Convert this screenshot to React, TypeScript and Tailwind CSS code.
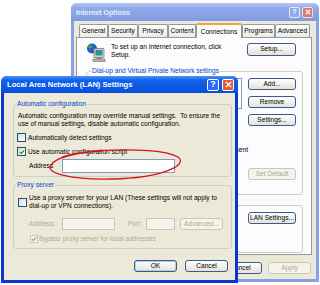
import type { ReactNode } from "react";

type BtnProps = {
  children: ReactNode;
  disabled?: boolean;
  isDefault?: boolean;
  className?: string;
};

const XpButton = ({ children, disabled, isDefault, className = "" }: BtnProps) => (
  <div
    className={`flex h-[12px] shrink-0 items-center justify-center rounded-[3px] border leading-none ${
      disabled
        ? "border-[#C9C7BA] bg-[#F5F4EA] text-[#ACA899]"
        : "border-[#3C5A86] bg-linear-to-b from-white to-[#E4E2D8] text-black"
    } ${isDefault ? "shadow-[inset_0_0_0_1px_#B4CCF2]" : ""} ${className}`}
  >
    {children}
  </div>
);

const CheckBox = ({ checked, disabled, small }: { checked?: boolean; disabled?: boolean; small?: boolean }) => (
  <div
    className={`flex shrink-0 items-center justify-center border ${small ? "h-[8px] w-[8px]" : "h-[9px] w-[9px]"} ${
      disabled ? "border-[#CAC8BB] bg-[#F5F4EA]" : "border-[#1C5180] bg-linear-to-br from-[#DCDCD7] to-white"
    }`}
  >
    {checked && (
      <svg viewBox="0 0 7 7" className="h-[6px] w-[6px]">
        <path d="M1 3.5 L2.8 5.3 L6 1.6" fill="none" stroke={disabled ? "#ACA899" : "#21A121"} strokeWidth="1.5" />
      </svg>
    )}
  </div>
);

const Group = ({ label, children, className = "", legendClass = "" }: { label?: string; children: ReactNode; className?: string; legendClass?: string }) => (
  <fieldset className={`rounded-[3px] border border-[#D0D0BF] ${className}`}>
    {label && <legend className={`px-[1px] text-[#0046D5] ${legendClass}`}>{label}</legend>}
    {children}
  </fieldset>
);

const TitleButtons = ({ active }: { active?: boolean }) =>
  active ? (
    <div className="ml-auto flex gap-[3px]">
      <div className="flex h-[12px] w-[12px] items-center justify-center rounded-[2px] border border-white bg-[#2D6CF2] text-[9px] font-bold leading-none text-white">?</div>
      <div className="flex h-[12px] w-[12px] items-center justify-center rounded-[2px] border border-white bg-[#E35A33]">
        <svg viewBox="0 0 8 8" className="h-[7px] w-[7px]">
          <path d="M1 1 L7 7 M7 1 L1 7" stroke="white" strokeWidth="1.6" />
        </svg>
      </div>
    </div>
  ) : (
    <div className="ml-auto flex gap-[2px]">
      <div className="flex h-[11px] w-[11px] items-center justify-center rounded-[2px] border border-[#E6ECFB] bg-[#8FA8EA] text-[8px] font-bold leading-none text-white">?</div>
      <div className="flex h-[11px] w-[11px] items-center justify-center rounded-[2px] border border-[#F3DEDC] bg-[#D77A6E]">
        <svg viewBox="0 0 8 8" className="h-[6px] w-[6px]">
          <path d="M1 1 L7 7 M7 1 L1 7" stroke="white" strokeWidth="1.5" />
        </svg>
      </div>
    </div>
  );

const tabs = [
  { name: "General", w: "w-[29px]" },
  { name: "Security", w: "w-[30px]" },
  { name: "Privacy", w: "w-[30px]" },
  { name: "Content", w: "w-[28px]" },
  { name: "Connections", w: "w-[46px]", active: true },
  { name: "Programs", w: "w-[33px]" },
  { name: "Advanced", w: "w-[35px]" },
];

const NetIcon = () => (
  <svg width="20" height="19" viewBox="0 0 20 19" className="shrink-0">
    <circle cx="6" cy="5.5" r="5" fill="#1E5FC8" />
    <path d="M2.5 2.5 C4.5 1.2 7 2.2 6.2 4.4 C5.4 5.8 3.2 6 2 4.8 Z" fill="#3DAA3A" />
    <path d="M7.2 6.5 C9 5.8 10.3 7.6 9.3 9.2 C8.3 10.3 6.6 9.2 7.2 6.5 Z" fill="#3DAA3A" />
    <rect x="8" y="5.5" width="10" height="9" rx="0.5" fill="#D4D4D4" stroke="#505050" strokeWidth="0.6" />
    <rect x="9.5" y="7" width="7" height="5.5" fill="#2F8F95" />
    <rect x="10.5" y="14.5" width="5" height="1.5" fill="#8A8A8A" />
    <rect x="7" y="16" width="12" height="2.5" fill="#B8B8B8" stroke="#505050" strokeWidth="0.5" />
  </svg>
);

const InternetOptions = () => (
  <div className="absolute left-[71px] top-[3px] flex h-[279px] w-[248px] flex-col rounded-t-[6px] bg-[#8AA0E6]">
    <div className="flex h-[18px] shrink-0 items-center rounded-t-[6px] bg-[linear-gradient(to_bottom,#B5C7F2_0%,#8FA9E9_30%,#7E9BE3_100%)] pl-[5px] pr-[6px]">
      <span className="text-[7px] font-bold leading-none text-[#E8EEFC]">Internet Options</span>
      <TitleButtons />
    </div>
    <div className="mx-[3px] mb-[3px] flex flex-1 flex-col bg-[#ECE9D8] pl-[2px] pr-[4px] pt-[2px]">
      <div className="flex h-[14px] items-end pl-[3px]">
        {tabs.map((t) =>
          t.active ? (
            <div
              key={t.name}
              className={`relative z-10 -mb-[1px] flex h-[15px] items-center justify-center rounded-t-[2px] border-x border-t-[2px] border-x-[#919B9C] border-t-[#F2A33A] bg-[#FCFCFE] ${t.w}`}
            >
              {t.name}
            </div>
          ) : (
            <div
              key={t.name}
              className={`flex h-[13px] items-center justify-center rounded-t-[2px] border border-b-0 border-[#919B9C] bg-linear-to-b from-white to-[#ECEBE6] ${t.w}`}
            >
              {t.name}
            </div>
          )
        )}
      </div>
      <div className="flex h-[218px] flex-col border border-[#919B9C] bg-[#FCFCFE]">
        <div className="flex items-start pl-[9px] pr-[15px] pt-[5px]">
          <NetIcon />
          <div className="ml-[5px] flex-1">
            To set up an Internet connection, click
            <br />
            Setup.
          </div>
          <XpButton className="h-[13px] w-[49px]">Setup...</XpButton>
        </div>
        <Group label="Dial-up and Virtual Private Network settings" className="ml-[9px] mr-[8px] mt-[5px] pb-[14px] pl-[5px] pr-[6px]" legendClass="-ml-[1px]">
          <div className="mt-[3px] flex gap-[6px]">
            <div className="h-[31px] flex-1 border border-[#7F9DB9] bg-white" />
            <div className="flex w-[48px] flex-col gap-[6px]">
              <XpButton className="w-[48px]">Add...</XpButton>
              <XpButton className="w-[48px]">Remove</XpButton>
              <XpButton className="w-[48px]">Settings...</XpButton>
            </div>
          </div>
          <div className="mt-[20px] flex h-[9px] justify-end whitespace-nowrap pr-[48px]">present</div>
          <div className="mt-[13px] flex justify-end">
            <XpButton disabled className="w-[48px]">Set Default</XpButton>
          </div>
        </Group>
        <Group className="ml-[9px] mr-[8px] mt-[10px] pb-[28px] pl-[5px] pr-[6px]">
          <div className="mt-[6px] flex justify-end">
            <XpButton className="w-[48px]">LAN Settings...</XpButton>
          </div>
        </Group>
      </div>
      <div className="mt-[7px] flex justify-end gap-[6px] pr-[1px]">
        <XpButton className="w-[43px]">OK</XpButton>
        <XpButton className="w-[43px]">Cancel</XpButton>
        <XpButton disabled className="w-[43px]">Apply</XpButton>
      </div>
    </div>
  </div>
);

const LanDialog = () => (
  <div className="absolute left-[1px] top-[76px] flex h-[207px] w-[237px] flex-col rounded-t-[6px] bg-[#0B35D4]">
    <div className="flex h-[17px] shrink-0 items-center rounded-t-[6px] bg-[linear-gradient(to_bottom,#4A93F8_0%,#1262E9_25%,#0857E2_70%,#0A4FD8_100%)] pl-[6px] pr-[4px]">
      <span className="text-[7.6px] font-bold leading-none text-white">Local Area Network (LAN) Settings</span>
      <TitleButtons active />
    </div>
    <div className="mx-[3px] mb-[3px] flex flex-1 flex-col bg-[#ECE9D8] pt-[7px]">
      <Group label="Automatic configuration" className="ml-[9px] mr-[3px] pb-[3px] pl-[4px] pr-[3px]" legendClass="-ml-[2px]">
        <p className="mt-[4px]">
          Automatic configuration may override manual settings.&nbsp; To ensure the
          <br />
          use of manual settings, disable automatic configuration.
        </p>
        <div className="-ml-[1px] mt-[5px] flex h-[9px] items-center gap-[2px]">
          <CheckBox />
          <span>Automatically detect settings</span>
        </div>
        <div className="-ml-[1px] mt-[5px] flex h-[9px] items-center gap-[2px]">
          <CheckBox checked />
          <span>Use automatic configuration script</span>
        </div>
        <div className="mt-[3px] flex items-center pl-[11px]">
          <span className="w-[33px]">Address</span>
          <div className="h-[14px] w-[113px] border border-[#7F9DB9] bg-white" />
        </div>
      </Group>
      <Group label="Proxy server" className="ml-[9px] mr-[3px] mt-[4px] pb-[5px] pl-[4px] pr-[3px]" legendClass="-ml-[2px]">
        <div className="mt-[5px] flex items-center gap-[2px]">
          <CheckBox />
          <span>
            Use a proxy server for your LAN (These settings will not apply to
            <br />
            dial-up or VPN connections).
          </span>
        </div>
        <div className="mt-[8px] flex items-center pl-[11px] text-[#ACA899]">
          <span className="w-[33px]">Address:</span>
          <div className="h-[12px] w-[53px] border border-[#C9C7BA] bg-[#F5F4EA]" />
          <span className="ml-[13px] w-[18px]">Port:</span>
          <div className="h-[12px] w-[29px] border border-[#C9C7BA] bg-[#F5F4EA]" />
          <XpButton disabled className="ml-[5px] w-[43px]">Advanced...</XpButton>
        </div>
        <div className="mt-[5px] flex h-[8px] items-center gap-[1px] pl-[12px] text-[#ACA899]">
          <CheckBox checked disabled small />
          <span>Bypass proxy server for local addresses</span>
        </div>
      </Group>
      <div className="mt-[11px] flex justify-end gap-[8px] pr-[7px]">
        <XpButton isDefault className="w-[43px]">OK</XpButton>
        <XpButton className="w-[43px]">Cancel</XpButton>
      </div>
    </div>
  </div>
);

export default function App() {
  return (
    <div className="relative h-[285px] w-[320px] overflow-hidden bg-white font-['Liberation_Sans',Arial,sans-serif] text-[6.6px] leading-[8px] text-black">
      <InternetOptions />
      <LanDialog />
      <svg className="pointer-events-none absolute left-0 top-0" width="320" height="285" viewBox="0 0 320 285">
        <path
          d="M62 157 C90 148 160 147 178 157 C189 165 162 178 112 179 C72 180 44 173 51 165 C55 158 76 152 102 151"
          fill="none"
          stroke="#D4141C"
          strokeWidth="1.3"
        />
      </svg>
    </div>
  );
}
